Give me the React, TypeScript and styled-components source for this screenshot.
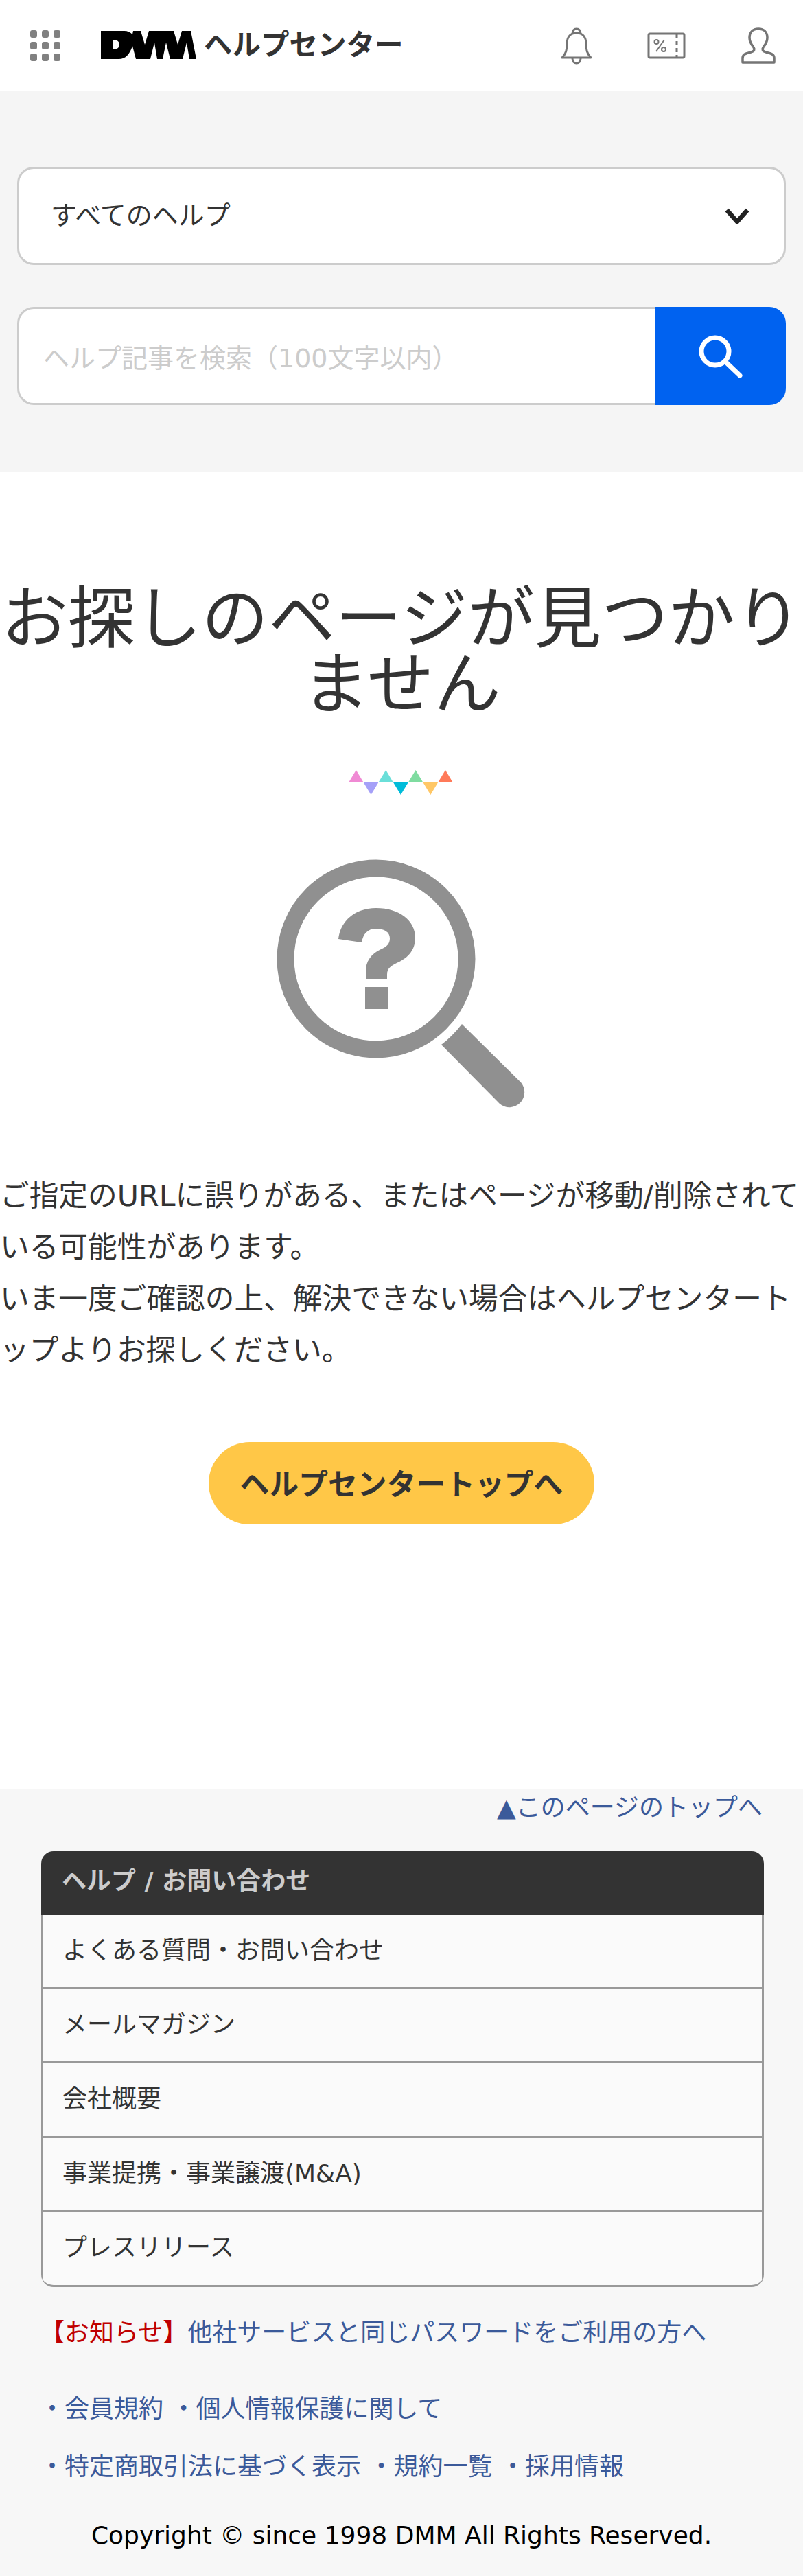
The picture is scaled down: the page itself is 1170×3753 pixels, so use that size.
import styled, { createGlobalStyle } from 'styled-components';

const GlobalStyle = createGlobalStyle`
  * {
    box-sizing: border-box;
  }
  body {
    margin: 0;
    background: #fff;
    color: #333;
    font-family: "DejaVu Sans", "Noto Sans CJK JP", sans-serif;
  }
`;

const triangles = [
  { color: '#f08ad4', down: false },
  { color: '#a5a0f8', down: true },
  { color: '#6adfd9', down: false },
  { color: '#00bcd9', down: true },
  { color: '#7fdca0', down: false },
  { color: '#ffc766', down: true },
  { color: '#ff7a59', down: false },
];

const menuItems = [
  'よくある質問・お問い合わせ',
  'メールマガジン',
  '会社概要',
  '事業提携・事業譲渡(M&A)',
  'プレスリリース',
];

function App() {
  return (
    <>
      <GlobalStyle />
      <Header>
        <HeaderLeft>
          <GridIcon>
            {Array.from({ length: 9 }).map((_, i) => (
              <GridDot key={i} />
            ))}
          </GridIcon>
          <Logo>
            <svg width="139" height="41" viewBox="0 0 139 41">
              <path
                d="M0 0H34C39 0 43 2 46 5L47 0H58L64 20L70 0H106L112 20L118 0H131L139 41H129L125 17L119 41H101L95 17L90 41H82L78 17L72 41H51L46 22C42 34 36 41 26 41H0ZM17 13V27H19C24 27 27 24 27 20C27 16 24 13 19 13Z"
                fill="#000"
                fillRule="evenodd"
              />
            </svg>
            <LogoText>ヘルプセンター</LogoText>
          </Logo>
        </HeaderLeft>
        <HeaderIcons>
          <svg width="46" height="54" viewBox="0 0 46 54" fill="none" stroke="#757575" strokeWidth="3">
            <path d="M2 44C8 38 9 32 9 24C9 13 15 8 23 8C31 8 37 13 37 24C37 32 38 38 44 44Z" strokeLinejoin="round" />
            <path d="M17 10C17 5 19 2 23 2C27 2 29 5 29 10" />
            <path d="M17 45C17 50 20 52 23 52C26 52 29 50 29 45" />
          </svg>
          <svg width="56" height="40" viewBox="0 0 56 40" fill="none" stroke="#757575" strokeWidth="3">
            <rect x="2" y="2" width="52" height="35" rx="2" />
            <path d="M43 3V37" strokeDasharray="6 4" />
            <circle cx="13.5" cy="14" r="3" strokeWidth="2" />
            <circle cx="24" cy="25" r="3" strokeWidth="2" />
            <path d="M25 11L13 28" strokeWidth="2" />
          </svg>
          <svg width="52" height="54" viewBox="0 0 52 54" fill="none" stroke="#757575" strokeWidth="3.5">
            <path
              d="M3 51V45C3 39 7 38 15 36C20 35 21 32 19 29C15 24 13 20 13 15C13 7 18 2 26 2C34 2 39 7 39 15C39 20 37 24 33 29C31 32 32 35 37 36C45 38 49 39 49 45V51Z"
              strokeLinejoin="round"
            />
          </svg>
        </HeaderIcons>
      </Header>

      <SearchArea>
        <SelectBox>
          <SelectLabel>すべてのヘルプ</SelectLabel>
          <svg width="36" height="24" viewBox="0 0 36 24" fill="none" stroke="#222" strokeWidth="6.5">
            <path d="M3 3L18 20L33 3" />
          </svg>
        </SelectBox>
        <SearchBox>
          <SearchField>ヘルプ記事を検索（100文字以内）</SearchField>
          <SearchButton>
            <svg width="64" height="64" viewBox="0 0 64 64" fill="none" stroke="#fff" strokeWidth="7" strokeLinecap="round">
              <circle cx="24" cy="25" r="20" />
              <path d="M39 40L60 60" />
            </svg>
          </SearchButton>
        </SearchBox>
      </SearchArea>

      <Main>
        <Title>お探しのページが見つかりません</Title>
        <Triangles>
          {triangles.map((t) => (
            <Triangle key={t.color} $color={t.color} $down={t.down} />
          ))}
        </Triangles>
        <NotFoundIcon>
          <svg width="370" height="380" viewBox="0 0 370 380" fill="#909090">
            <circle cx="147" cy="158" r="132" fill="none" stroke="#909090" strokeWidth="25" />
            <path d="M92 129C95 102 117 84 147 84C181 84 204 102 204 127C204 145 194 156 179 163C169 168 163 171 163 181V188H132V176C132 162 139 151 154 144C163 140 167 136 167 128C167 119 159 114 147 114C135 114 128 121 126 134Z" />
            <rect x="131" y="199" width="33" height="32" />
            <path d="M272 253Q258 271 242 283L327 369A22 22 0 0 0 358 338Z" />
          </svg>
        </NotFoundIcon>
        <Message>
          ご指定のURLに誤りがある、またはページが移動/削除されている可能性があります。
          <br />
          いま一度ご確認の上、解決できない場合はヘルプセンタートップよりお探しください。
        </Message>
        <TopButton>ヘルプセンタートップへ</TopButton>
      </Main>

      <Footer>
        <PageTop>▲このページのトップへ</PageTop>
        <Menu>
          <MenuHead>ヘルプ / お問い合わせ</MenuHead>
          {menuItems.map((item) => (
            <MenuRow key={item}>{item}</MenuRow>
          ))}
        </Menu>
        <Notice>
          <NoticeLabel>【お知らせ】</NoticeLabel>他社サービスと同じパスワードをご利用の方へ
        </Notice>
        <FooterLinks>
          <LinkLine>・会員規約 ・個人情報保護に関して</LinkLine>
          <LinkLine>・特定商取引法に基づく表示 ・規約一覧 ・採用情報</LinkLine>
        </FooterLinks>
        <Copyright>Copyright © since 1998 DMM All Rights Reserved.</Copyright>
      </Footer>
    </>
  );
}

export default App;

const Header = styled.header`
  height: 132px;
  padding: 40px 39px 0 44px;
  display: flex;
  justify-content: space-between;
  background: #fff;
`;

const HeaderLeft = styled.div`
  display: flex;
  align-items: flex-start;
  gap: 59px;
`;

const GridIcon = styled.div`
  margin-top: 4px;
  width: 44px;
  display: grid;
  grid-template-columns: repeat(3, 10px);
  grid-auto-rows: 11px;
  justify-content: space-between;
  row-gap: 6px;
`;

const GridDot = styled.span`
  background: #808080;
  border-radius: 3px;
`;

const Logo = styled.div`
  margin-top: 5px;
  display: flex;
  align-items: center;
  gap: 11px;
`;

const LogoText = styled.span`
  font-size: 41.5px;
  font-weight: 700;
  line-height: 41px;
  color: #333;
`;

const HeaderIcons = styled.div`
  display: flex;
  align-items: flex-start;
  gap: 80px;
  svg:nth-child(2) {
    margin-top: 7px;
  }
`;

const SearchArea = styled.section`
  background: #f5f5f5;
  padding: 111px 25px 97px;
  display: flex;
  flex-direction: column;
  gap: 61px;
`;

const SelectBox = styled.div`
  height: 143px;
  padding: 0 50px 0 50px;
  background: #fff;
  border: 3px solid #ccc;
  border-radius: 24px;
  display: flex;
  justify-content: space-between;
  align-items: center;
  font-size: 38px;
`;

const SelectLabel = styled.span`
  margin-left: -4px;
  padding-bottom: 8px;
`;

const SearchBox = styled.div`
  height: 143px;
  display: flex;
`;

const SearchField = styled.div`
  flex: 1;
  padding-left: 35px;
  background: #fff;
  border: 3px solid #ccc;
  border-right: 0;
  border-radius: 24px 0 0 24px;
  display: flex;
  align-items: center;
  font-size: 38px;
  color: #ccc;
`;

const SearchButton = styled.div`
  width: 191px;
  background: #0062f0;
  border-radius: 0 24px 24px 0;
  display: flex;
  justify-content: center;
  align-items: center;
`;

const Main = styled.main`
  height: 1920px;
  padding-top: 167px;
  background: #fff;
`;

const Title = styled.h1`
  margin: 0 -10px;
  font-size: 97.4px;
  font-weight: 400;
  line-height: 96px;
  text-align: center;
  color: #333;
`;

const Triangles = styled.div`
  margin-top: 76px;
  margin-left: 508px;
  display: flex;
`;

const Triangle = styled.span<{ $color: string; $down: boolean }>`
  width: 21.7px;
  height: 18px;
  background: ${(p) => p.$color};
  margin-top: ${(p) => (p.$down ? '18px' : '0')};
  clip-path: ${(p) =>
    p.$down ? 'polygon(0 0, 100% 0, 50% 100%)' : 'polygon(50% 0, 100% 100%, 0 100%)'};
`;

const NotFoundIcon = styled.div`
  margin-top: 81px;
  margin-left: 401px;
  height: 380px;
`;

const Message = styled.p`
  margin: 86px 0 0;
  font-size: 42.7px;
  line-height: 75px;
`;

const TopButton = styled.div`
  margin: 96px 0 0 304px;
  width: 562px;
  height: 120px;
  background: #ffc747;
  border-radius: 60px;
  display: flex;
  justify-content: center;
  align-items: center;
  font-size: 42.8px;
  font-weight: 700;
  padding-bottom: 4px;
`;

const Footer = styled.footer`
  height: 1146px;
  background: #f7f7f7;
  padding: 0 57px 0 60px;
`;

const PageTop = styled.div`
  padding-top: 3px;
  padding-right: 2px;
  text-align: right;
  font-size: 36px;
  line-height: 48px;
  color: #3b5a9a;
`;

const Menu = styled.div`
  margin-top: 39px;
  background: #fafafa;
  border-radius: 18px;
  border-bottom: 3px solid #999;
  overflow: hidden;
`;

const MenuHead = styled.div`
  height: 93px;
  padding-left: 30px;
  background: #333;
  color: #ccc;
  font-size: 36px;
  font-weight: 700;
  line-height: 88px;
`;

const MenuRow = styled.div`
  height: 108.2px;
  padding: 28px 0 0 28px;
  border: 3px solid #999;
  border-top: 0;
  font-size: 36px;
  line-height: 48px;
  color: #333;
  &:last-child {
    height: 106px;
    border-bottom: 0;
  }
`;

const Notice = styled.p`
  margin: 43px 0 0 -2px;
  font-size: 36px;
  line-height: 48px;
  color: #3b5a9a;
`;

const NoticeLabel = styled.span`
  color: #c00000;
`;

const FooterLinks = styled.div`
  margin: 63px 0 0 -2px;
  display: flex;
  flex-direction: column;
  gap: 36px;
`;

const LinkLine = styled.div`
  font-size: 36px;
  line-height: 48px;
  color: #3b5a9a;
`;

const Copyright = styled.p`
  margin: 52px -57px 0 -60px;
  text-align: center;
  font-size: 36px;
  line-height: 48px;
  color: #000;
`;
